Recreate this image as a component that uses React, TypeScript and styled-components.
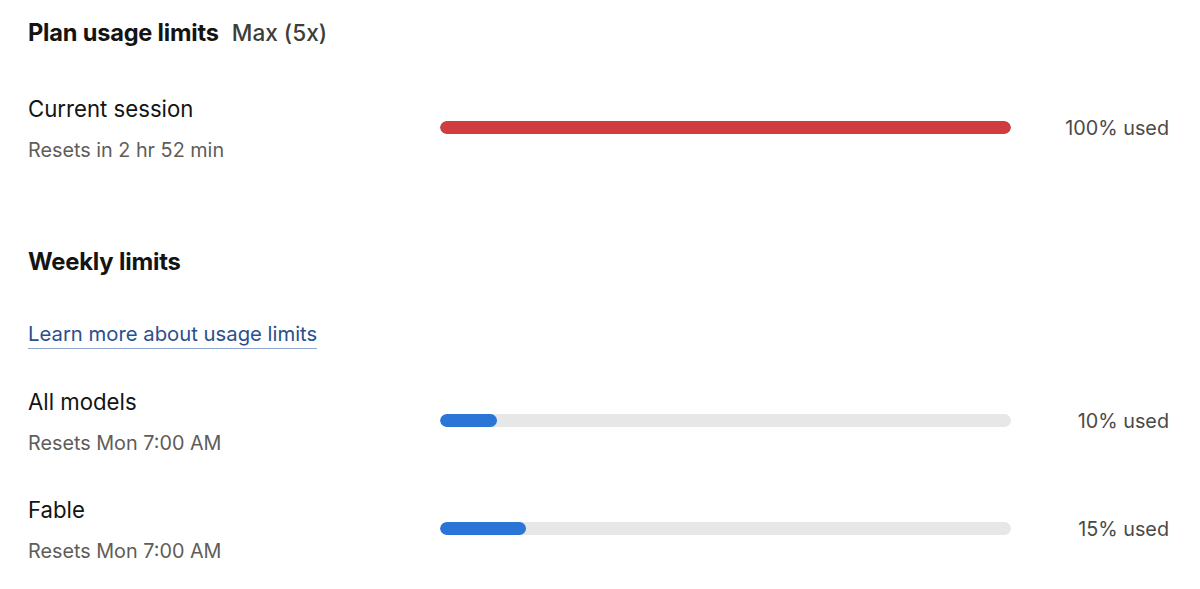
import React from "react";
import styled, { createGlobalStyle } from "styled-components";

const Global = createGlobalStyle`
  html, body { margin: 0; padding: 0; background: #ffffff; }
  body { font-family: Inter, "Noto Sans", sans-serif; color: #141413; -webkit-font-smoothing: antialiased; }
`;

const Page = styled.div`
  padding: 18px 31px 0 28px;
  display: flex;
  flex-direction: column;
`;

const Header = styled.div`
  display: flex;
  align-items: baseline;
  gap: 13px;
  height: 30px;
  line-height: 30px;
`;

const Title = styled.h2`
  margin: 0;
  font-size: 23.6px;
  font-weight: 700;
  letter-spacing: -0.2px;
  color: #141413;
`;

const PlanName = styled.span`
  font-size: 22.6px;
  font-weight: 500;
  color: #3d3d3a;
`;

const SectionTitle = styled.h3`
  margin: 0;
  font-size: 23.8px;
  font-weight: 700;
  letter-spacing: -0.2px;
  line-height: 30px;
  height: 30px;
  color: #141413;
`;

const Link = styled.a`
  align-self: flex-start;
  font-size: 20.3px;
  line-height: 28px;
  color: #2b4f8e;
  text-decoration: none;
  border-bottom: 1px solid #8fa9d3;
`;

const Row = styled.div<{ $top: number }>`
  margin-top: ${(p) => p.$top}px;
  display: grid;
  grid-template-columns: 412px 571px 1fr;
  align-items: center;
`;

const Label = styled.div`
  display: flex;
  flex-direction: column;
  gap: 13px;
`;

const Name = styled.div`
  font-size: 22.2px;
  line-height: 28px;
  color: #141413;
`;

const Sub = styled.div`
  font-size: 19.8px;
  line-height: 28px;
  color: #5e5d59;
`;

const Track = styled.div`
  height: 13px;
  border-radius: 7px;
  background: #e7e7e7;
  overflow: hidden;
  margin-bottom: 4px;
`;

const Fill = styled.div<{ $tone: "red" | "blue" }>`
  height: 100%;
  border-radius: 7px;
  background: ${(p) => (p.$tone === "red" ? "#d13c3c" : "#2a75d6")};
`;

const Value = styled.div`
  justify-self: end;
  font-size: 19.8px;
  line-height: 28px;
  color: #4a4a47;
  margin-bottom: 4px;
`;

type UsageProps = { name: string; reset: string; pct: number; top: number };

const Usage = ({ name, reset, pct, top }: UsageProps) => (
  <Row $top={top}>
    <Label>
      <Name>{name}</Name>
      <Sub>{reset}</Sub>
    </Label>
    <Track>
      <Fill $tone={pct >= 100 ? "red" : "blue"} style={{ width: `${pct}%` }} />
    </Track>
    <Value>{pct}% used</Value>
  </Row>
);

export default function App() {
  return (
    <>
      <Global />
      <Page>
        <Header>
          <Title>Plan usage limits</Title>
          <PlanName>Max (5x)</PlanName>
        </Header>
        <Usage name="Current session" reset="Resets in 2 hr 52 min" pct={100} top={47} />
        <SectionTitle style={{ marginTop: 83 }}>Weekly limits</SectionTitle>
        <Link href="#" style={{ marginTop: 43 }}>Learn more about usage limits</Link>
        <Usage name="All models" reset="Resets Mon 7:00 AM" pct={10} top={39} />
        <Usage name="Fable" reset="Resets Mon 7:00 AM" pct={15} top={39} />
      </Page>
    </>
  );
}
